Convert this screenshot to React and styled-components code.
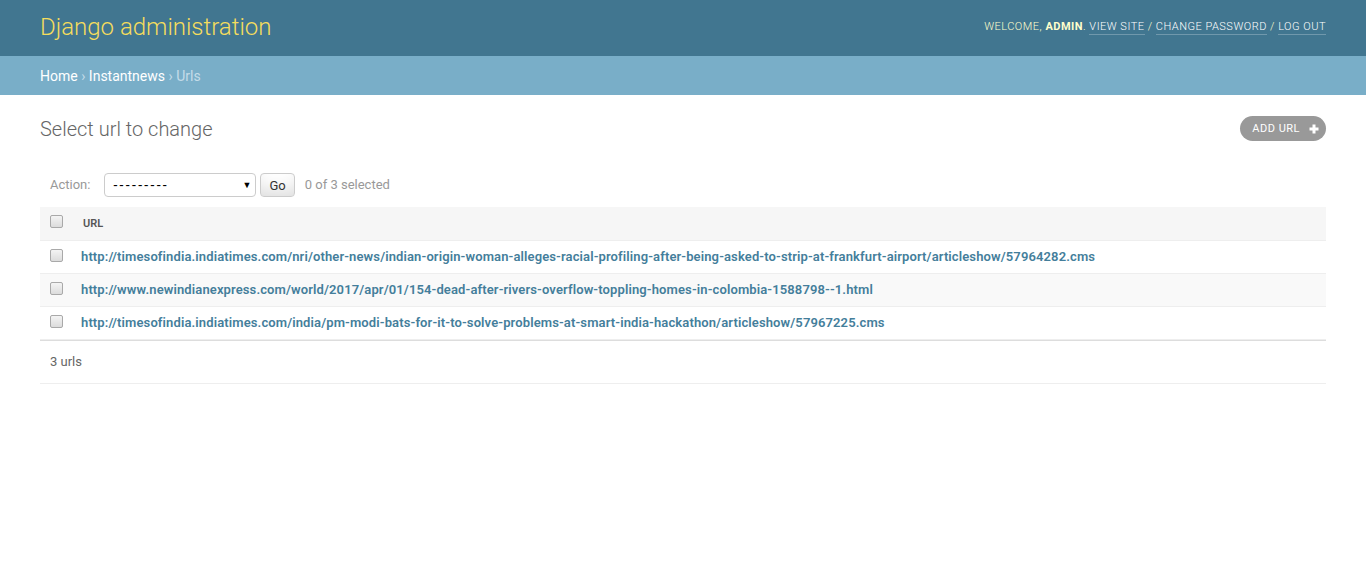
import React from 'react';
import styled, { createGlobalStyle } from 'styled-components';

const GlobalStyle = createGlobalStyle`
  html, body {
    margin: 0;
    padding: 0;
    background: #fff;
  }
  body {
    font-family: Roboto, "Liberation Sans", Arial, sans-serif;
    font-size: 14px;
    color: #333;
  }
`;

const Header = styled.div`
  display: flex;
  justify-content: space-between;
  align-items: center;
  height: 56px;
  box-sizing: border-box;
  padding: 0 40px;
  background: #417690;
  color: #ffc;
`;

const Branding = styled.h1`
  margin: 0 20px 0 0;
  padding: 0;
  font-weight: 300;
  font-size: 24px;
  color: #f5dd5d;
  line-height: 28px;
  position: relative;
  top: -1px;
`;

const UserTools = styled.div`
  font-weight: 300;
  font-size: 11px;
  letter-spacing: 0.5px;
  text-transform: uppercase;
  text-align: right;
  color: #ffc;
  position: relative;
  top: -2px;

  strong {
    font-weight: 700;
  }
`;

const ToolLink = styled.a`
  color: #fff;
  text-decoration: none;
  border-bottom: 1px solid rgba(255, 255, 255, 0.25);
  padding-bottom: 1px;
`;

const Breadcrumbs = styled.div`
  background: #79aec8;
  padding: 11px 40px 9px;
  font-size: 14px;
  line-height: 19px;
  color: #c4dce8;

  a {
    color: #fff;
    text-decoration: none;
  }
`;

const Content = styled.div`
  padding: 20px 40px;
`;

const TitleRow = styled.div`
  display: flex;
  justify-content: space-between;
  align-items: flex-start;
  margin-bottom: 20px;
`;

const Title = styled.h1`
  margin: 0;
  font-weight: 300;
  font-size: 20px;
  line-height: 28px;
  color: #666;
`;

const AddButton = styled.a`
  display: flex;
  align-items: center;
  gap: 8px;
  height: 25px;
  box-sizing: border-box;
  margin-top: 1px;
  padding: 0 6px 0 12px;
  background: #999;
  border-radius: 15px;
  font-size: 11px;
  font-weight: 400;
  letter-spacing: 0.5px;
  text-transform: uppercase;
  color: #fff;
  text-decoration: none;
`;

const Actions = styled.div`
  display: flex;
  align-items: center;
  padding: 10px;
  line-height: 24px;
  color: #999;
  font-size: 13px;
`;

const SelectWrap = styled.span`
  position: relative;
  margin-left: 14px;
`;

const Select = styled.select`
  appearance: none;
  width: 152px;
  height: 24px;
  box-sizing: border-box;
  border: 1px solid #ccc;
  border-radius: 4px;
  background: #fff;
  color: #000;
  font-family: Roboto, "Liberation Sans", Arial, sans-serif;
  font-size: 14px;
  letter-spacing: 2.3px;
  padding: 0 0 0 8px;
  margin: 0;
  display: block;
`;

const Arrow = styled.span`
  position: absolute;
  right: 5px;
  top: 0;
  font-size: 9px;
  line-height: 24px;
  color: #000;
  pointer-events: none;
`;

const GoButton = styled.button`
  margin-left: 4px;
  height: 24px;
  padding: 4px 8px;
  font-family: Roboto, "Liberation Sans", Arial, sans-serif;
  font-size: 13px;
  line-height: 1;
  color: #333;
  border: 1px solid #ccc;
  border-radius: 4px;
  background: #fff;
  box-shadow: 0 -15px 20px -10px rgba(0, 0, 0, 0.15) inset;
`;

const Counter = styled.span`
  margin-left: 10px;
  font-size: 13px;
  color: #999;
`;

const Table = styled.table`
  width: 100%;
  border-collapse: collapse;
`;

const HeadCell = styled.th`
  height: 33px;
  box-sizing: border-box;
  padding: 0 10px;
  background: #f6f6f6;
  border-bottom: 1px solid #eee;
  text-align: ${p => (p.$check ? 'center' : 'left')};
  width: ${p => (p.$check ? '33px' : 'auto')};
  ${p => p.$check && 'padding: 0;'}
  font-size: 11px;
  font-weight: 600;
  text-transform: uppercase;
  color: #555;
  vertical-align: middle;
`;

const Row = styled.tr`
  background: ${p => (p.$alt ? '#f9f9f9' : '#fff')};
`;

const Cell = styled.td`
  padding: 8px;
  font-size: 13px;
  line-height: 16px;
  border-bottom: 1px solid #eee;
  vertical-align: top;
  text-align: ${p => (p.$check ? 'center' : 'left')};
  ${p => p.$check && 'padding: 8px 0; width: 33px;'}
`;

const Checkbox = styled.input.attrs({ type: 'checkbox' })`
  appearance: none;
  display: block;
  width: 13px;
  height: 13px;
  margin: ${p => (p.$head ? '-4px auto 0' : '0 auto')};
  box-sizing: border-box;
  border: 1px solid #a9a9a9;
  border-radius: 2px;
  background: linear-gradient(#f4f4f4, #dcdcdc);
`;

const RowLink = styled.a`
  color: #447e9b;
  font-weight: 600;
  letter-spacing: 0.12px;
  text-decoration: none;
`;

const Paginator = styled.p`
  margin: 0;
  padding: 10px;
  font-size: 13px;
  line-height: 22px;
  color: #666;
  border-top: 1px solid #ddd;
  border-bottom: 1px solid #eee;
`;

const urls = [
  'http://timesofindia.indiatimes.com/nri/other-news/indian-origin-woman-alleges-racial-profiling-after-being-asked-to-strip-at-frankfurt-airport/articleshow/57964282.cms',
  'http://www.newindianexpress.com/world/2017/apr/01/154-dead-after-rivers-overflow-toppling-homes-in-colombia-1588798--1.html',
  'http://timesofindia.indiatimes.com/india/pm-modi-bats-for-it-to-solve-problems-at-smart-india-hackathon/articleshow/57967225.cms',
];

const PlusIcon = () => (
  <svg width="12" height="12" viewBox="0 0 12 12">
    <path d="M6 1.5v9M1.5 6h9" stroke="#fff" strokeWidth="3" />
  </svg>
);

export default function App() {
  return (
    <>
      <GlobalStyle />
      <Header>
        <Branding>Django administration</Branding>
        <UserTools>
          Welcome, <strong>admin</strong>. <ToolLink href="#">View site</ToolLink> /{' '}
          <ToolLink href="#">Change password</ToolLink> / <ToolLink href="#">Log out</ToolLink>
        </UserTools>
      </Header>
      <Breadcrumbs>
        <a href="#">Home</a> › <a href="#">Instantnews</a> › Urls
      </Breadcrumbs>
      <Content>
        <TitleRow>
          <Title>Select url to change</Title>
          <AddButton href="#">
            Add url <PlusIcon />
          </AddButton>
        </TitleRow>
        <Actions>
          <label>Action:</label>
          <SelectWrap>
            <Select defaultValue="">
              <option value="">---------</option>
              <option value="delete">Delete selected urls</option>
            </Select>
            <Arrow>▼</Arrow>
          </SelectWrap>
          <GoButton>Go</GoButton>
          <Counter>0 of 3 selected</Counter>
        </Actions>
        <Table>
          <thead>
            <tr>
              <HeadCell $check>
                <Checkbox $head />
              </HeadCell>
              <HeadCell>Url</HeadCell>
            </tr>
          </thead>
          <tbody>
            {urls.map((u, i) => (
              <Row key={u} $alt={i % 2 === 1}>
                <Cell $check>
                  <Checkbox />
                </Cell>
                <Cell>
                  <RowLink href="#">{u}</RowLink>
                </Cell>
              </Row>
            ))}
          </tbody>
        </Table>
        <Paginator>3 urls</Paginator>
      </Content>
    </>
  );
}
